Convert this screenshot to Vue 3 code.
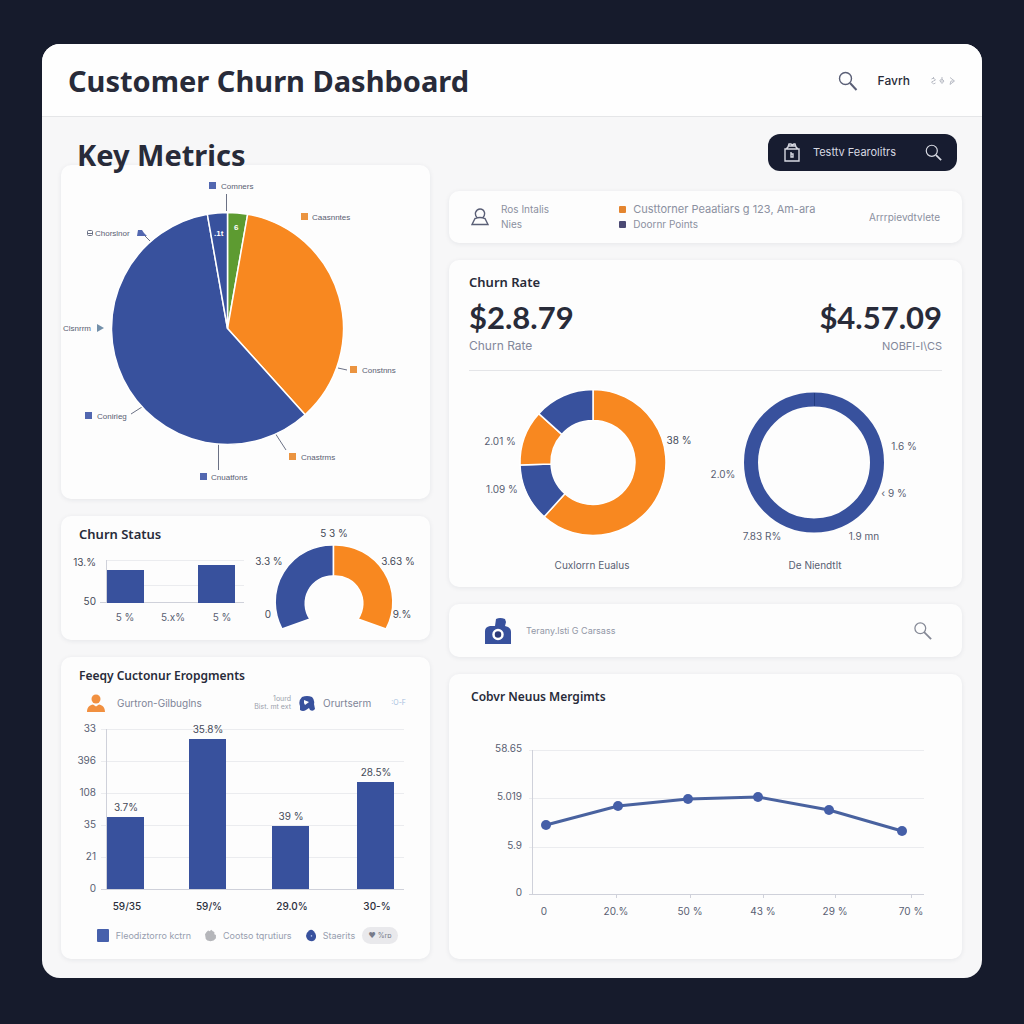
<script setup>
const point = (cx, cy, r, deg) => {
  const a = ((deg - 90) * Math.PI) / 180
  return `${(cx + r * Math.cos(a)).toFixed(2)} ${(cy + r * Math.sin(a)).toFixed(2)}`
}

const slice = (cx, cy, r, from, to) =>
  `M${cx} ${cy}L${point(cx, cy, r, from)}A${r} ${r} 0 ${to - from > 180 ? 1 : 0} 1 ${point(cx, cy, r, to)}Z`

const ring = (cx, cy, r, inner, from, to) => {
  const large = to - from > 180 ? 1 : 0
  return `M${point(cx, cy, r, from)}A${r} ${r} 0 ${large} 1 ${point(cx, cy, r, to)}L${point(cx, cy, inner, to)}A${inner} ${inner} 0 ${large} 0 ${point(cx, cy, inner, from)}Z`
}

const pieSlices = [
  { from: 0, to: 10, kind: 'green' },
  { from: 10, to: 138, kind: 'orange' },
  { from: 138, to: 350, kind: 'blue' },
  { from: 350, to: 360, kind: 'blue' }
]

const pieLabels = [
  { text: 'Comners', x: 160, y: 24, mark: 148, kind: 'blue' },
  { text: 'Caasnntes', x: 251, y: 55, mark: 240, kind: 'orange' },
  { text: 'Constnns', x: 301, y: 208, mark: 289, kind: 'orange' },
  { text: 'Cnastrms', x: 240, y: 295, mark: 228, kind: 'orange' },
  { text: 'Cnuatfons', x: 150, y: 315, mark: 139, kind: 'blue' },
  { text: 'Conirieg', x: 36, y: 254, mark: 24, kind: 'blue' }
]

const donutSlices = [
  { from: 0, to: 222, kind: 'orange' },
  { from: 222, to: 268, kind: 'blue' },
  { from: 268, to: 312, kind: 'orange' },
  { from: 312, to: 360, kind: 'blue' }
]

const segmentTicks = [
  { text: '33', y: 14 },
  { text: '396', y: 46 },
  { text: '108', y: 78 },
  { text: '35', y: 110 },
  { text: '21', y: 142 },
  { text: '0', y: 174 }
]

const segmentBars = [
  { x: 46, top: 102, value: '3.7%', label: '59/35' },
  { x: 128, top: 24, value: '35.8%', label: '59/%' },
  { x: 211, top: 111, value: '39 %', label: '29.0%' },
  { x: 296, top: 67, value: '28.5%', label: '30-%' }
]

const trendTicks = [
  { text: '58.65', y: 40 },
  { text: '5.019', y: 88 },
  { text: '5.9', y: 137 },
  { text: '0', y: 184 }
]

const trend = [
  { x: 97, y: 115, tick: 95, label: '0' },
  { x: 169, y: 96, tick: 167, label: '20.%' },
  { x: 239, y: 89, tick: 241, label: '50 %' },
  { x: 309, y: 87, tick: 314, label: '43 %' },
  { x: 380, y: 100, tick: 386, label: '29 %' },
  { x: 453, y: 121, tick: 462, label: '70 %' }
]
const trendLine = trend.map((p) => `${p.x},${p.y}`).join(' ')
</script>

<template>
  <main class="panel">
    <header class="topbar">
      <h1>Customer Churn Dashboard</h1>
      <nav class="top-actions" aria-label="Account">
        <button class="plain" aria-label="Search">
          <svg width="20" height="20" viewBox="0 0 20 20" class="line-icon">
            <circle cx="7.5" cy="7.5" r="6" /><path d="M12 12l6.5 7" stroke-width="2" />
          </svg>
        </button>
        <a href="#" class="user">Favrh</a>
        <button class="plain" aria-label="More">
          <svg width="26" height="10" viewBox="0 0 26 10" class="more">
            <path d="M3.500 1v2M1.500 3l2-1 2 2-2 1-2 1 2 2 2-1M12 1v2M9.500 4.500l2.500-1.500 2 2-2 2.500-2-2.500h3M20 1.500l4.500 3.500-4.500 3.500 1-3.500h3" />
          </svg>
        </button>
      </nav>
    </header>

    <div class="content">
      <div class="column">
        <h2>Key Metrics</h2>

        <section class="card">
          <svg viewBox="0 0 369 334" class="chart pie" role="img" aria-label="Key metrics breakdown">
            <g class="leaders">
              <path d="M165.500 29v17M157.500 278v27M70 249l11-7M214 268l11 17M277 203l9 2M81 68l8 8" />
            </g>
            <path v-for="s in pieSlices" :key="s.from" :d="slice(166.5, 163.5, 116, s.from, s.to)" :class="['slice', s.kind]" />
            <g v-for="l in pieLabels" :key="l.text">
              <rect :x="l.mark" :y="l.y - 7" width="7" height="7" :class="['mark', l.kind]" />
              <text :x="l.x" :y="l.y">{{ l.text }}</text>
            </g>
            <rect x="26.500" y="65.500" width="5" height="5" rx="1" class="outlined" />
            <path d="M27 68.500h4" class="outlined" />
            <text x="34" y="71">Chorslnor</text>
            <path d="M76 71l1-6h4l2 3 3 3z" class="mark blue" />
            <text x="2" y="166">Clsnrrm</text>
            <path d="M36 159l7 4-7 4z" class="mark pointer" />
            <text x="153" y="71" class="on-slice">.1t</text>
            <text x="173" y="65" class="on-slice">6</text>
          </svg>
        </section>

        <section class="card status">
          <div>
            <h3>Churn Status</h3>
            <svg viewBox="0 0 190 96" class="chart" role="img" aria-label="Churn status bars">
              <path d="M45 16.500h138M45 41.500h138" class="grid" />
              <path d="M45.500 16v43M39 58.500h144" class="axis" />
              <rect x="46" y="26" width="37" height="33" class="blue" />
              <rect x="137" y="21" width="37" height="38" class="blue" />
              <g class="ends dark"><text x="35" y="22">13.%</text><text x="35" y="61">50</text></g>
              <g class="mids"><text x="64" y="77">5 %</text><text x="112" y="77">5.x%</text><text x="161" y="77">5 %</text></g>
            </svg>
          </div>
          <svg viewBox="0 0 179 124" class="chart" role="img" aria-label="Churn status gauge">
            <path d="M31 113A57 57 0 0 1 82.500 29V60A27.500 27.500 0 0 0 59 103Z" class="slice blue" />
            <path d="M82.500 29A57 57 0 0 1 135 113L107 103A27.500 27.500 0 0 0 82.500 60Z" class="slice orange" />
            <g class="mids dark">
              <text x="83" y="21">5 3 %</text><text x="18" y="49">3.3 %</text><text x="147" y="49">3.63 %</text>
              <text x="17" y="102">0</text><text x="151" y="102">9.%</text>
            </g>
          </svg>
        </section>

        <section class="card">
          <h3 class="compact">Feeqy Cuctonur Eropgments</h3>
          <div class="segment-head">
            <svg width="18" height="18" viewBox="0 0 18 18" class="person">
              <circle cx="9" cy="5" r="4.500" /><path d="M0 18c0-5 3-7 6-7.500l3 2 3-2c3 .5 6 2.500 6 7.500z" />
            </svg>
            <span class="who">Gurtron-Gilbuglns</span>
            <span class="tiny">1ourd<br />Bist. mt ext</span>
            <svg width="16" height="15" viewBox="0 0 16 15">
              <path d="M3 1q5-2 10 0 3 3 2 7l1 5q-2 3-5 1l-1-2-3 2q-3 2-6 0v-4q-2-5 2-9z" class="blue" />
              <path d="M5 4l5 2-4 3-1-2z" fill="#fff" />
            </svg>
            <span>Orurtserm</span>
            <span class="tiny pale">:O-F</span>
          </div>
          <svg viewBox="0 0 369 204" class="chart" role="img" aria-label="Customer segments">
            <path v-for="t in segmentTicks" :key="t.text" :d="`M40 ${t.y + .5}H343`" :class="t.text === '0' ? 'axis' : 'grid'" />
            <path d="M45.500 14v160" class="axis" />
            <g class="ends"><text v-for="t in segmentTicks" :key="t.text" x="35" :y="t.y + 3">{{ t.text }}</text></g>
            <g v-for="b in segmentBars" :key="b.x" class="mids dark">
              <rect :x="b.x" :y="b.top" width="37" :height="174 - b.top" class="blue" />
              <text :x="b.x + 19" :y="b.top - 6">{{ b.value }}</text>
              <text :x="b.x + 20" y="195" class="strong">{{ b.label }}</text>
            </g>
          </svg>
          <div class="legend">
            <i class="swatch"></i><span>Fleodiztorro kctrn</span>
            <svg width="14" height="15" viewBox="0 0 14 15">
              <path d="M2 3l2-2 2 1 2-2 2 2 2 1v3l2 1v4l-3 3-4 1-4-1-2-2-1-6z" fill="#b5b6ba" />
            </svg>
            <span>Cootso tqrutiurs</span>
            <svg width="13" height="15" viewBox="0 0 13 15">
              <path d="M4 1q3-2 6 1 3 3 3 7-1 6-6 6-6-1-7-7 1-5 4-7z" class="blue" /><circle cx="7" cy="8" r="1" fill="#aebfed" />
            </svg>
            <span>Staerits</span>
            <button class="pill">♥ %rɒ</button>
          </div>
        </section>
      </div>

      <div class="column right">
        <button class="cta">
          <svg width="16" height="19" viewBox="0 0 16 19" class="line-icon">
            <path d="M1 6h14v12H1zM2 6l2-2 1-3h2l1 1 2-1h1l1 3 2 2M5 3h6M7 9v5h2v-3H7" />
          </svg>
          <span>Testtv Fearolitrs</span>
          <svg width="17" height="17" viewBox="0 0 20 20" class="line-icon">
            <circle cx="8" cy="8" r="6.500" /><path d="M13 13l6 6" stroke-width="2" />
          </svg>
        </button>

        <section class="card info">
          <div class="info-user">
            <svg width="18" height="18" viewBox="0 0 18 18" class="line-icon">
              <path d="M6 9.500Q4 8 4.500 4.500 6 1 9 1q3.500 0 4.500 3.500.5 3-1.500 5M4 10.500L1 16.500h16l-3-6Q9 8.500 4 10.500z" />
            </svg>
            <p>Ros Intalis<br />Nies</p>
          </div>
          <ul>
            <li><i class="dot orange-bg"></i><span class="wide">Custtorner Peaatiars g 123, Am-ara</span></li>
            <li><i class="dot navy-bg"></i>Doornr Points</li>
          </ul>
          <a href="#">Arrrpievdtvlete</a>
        </section>

        <section class="card rates">
          <h3>Churn Rate</h3>
          <div class="figures">
            <div><strong>$2.8.79</strong><span>Churn Rate</span></div>
            <div class="last"><strong>$4.57.09</strong><span class="caps">NOBFI-I\CS</span></div>
          </div>
          <svg viewBox="0 0 513 216" class="chart" role="img" aria-label="Churn rate rings">
            <path v-for="s in donutSlices" :key="s.from" :d="ring(144, 91.500, 73, 42, s.from, s.to)" :class="['slice', s.kind]" />
            <circle cx="365" cy="91.500" r="63" class="loop" />
            <path d="M365.500 22v13" class="seam" />
            <g class="mids">
              <text x="51" y="74">2.01 %</text><text x="230" y="73" class="dark">38 %</text><text x="53" y="122">1.09 %</text>
              <text x="274" y="107">2.0%</text><text x="455" y="79">1.6 %</text><text x="445" y="126">‹ 9 %</text>
              <text x="313" y="169">7.83 R%</text><text x="415" y="169">1.9 mn</text>
              <text x="143" y="198">Cuxlorrn Eualus</text><text x="366" y="198">De Niendtlt</text>
            </g>
          </svg>
        </section>

        <form class="card search" @submit.prevent>
          <svg width="26" height="26" viewBox="0 0 26 26">
            <path d="M0 26V13q0-4 5-5h5l1-7q4-2 9 0l1 3-1 4q6 1 6 6v12z" class="blue" />
            <circle cx="13" cy="16.500" r="4.500" fill="#2c3a78" stroke="#fff" stroke-width="2.500" />
          </svg>
          <input type="text" aria-label="Search" placeholder="Terany.lsti G Carsass" />
          <button class="plain" aria-label="Search">
            <svg width="18" height="18" viewBox="0 0 20 20" class="line-icon soft">
              <circle cx="7" cy="7" r="6" /><path d="M11 11l8 8" stroke-width="2" />
            </svg>
          </button>
        </form>

        <section class="card trend">
          <h3>Cobvr Neuus Mergimts</h3>
          <svg viewBox="0 0 513 236" class="chart" role="img" aria-label="Trend">
            <path v-for="t in trendTicks" :key="t.text" :d="`M80 ${t.y + .5}H475`" :class="t.text === '0' ? 'axis' : 'grid'" />
            <path d="M83.500 40v144" class="axis" />
            <path v-for="p in trend.slice(1)" :key="p.x" :d="`M${p.tick + .5} 184v4`" class="axis" />
            <g class="ends"><text v-for="t in trendTicks" :key="t.text" x="73" :y="t.y + 2">{{ t.text }}</text></g>
            <polyline :points="trendLine" class="trend-line" />
            <g v-for="p in trend" :key="p.x" class="mids">
              <circle :cx="p.x" :cy="p.y" r="5" class="trend-dot" />
              <text :x="p.tick" y="205">{{ p.label }}</text>
            </g>
          </svg>
        </section>
      </div>
    </div>
  </main>
</template>

<style>
body {
  margin: 0;
  background: #161b2c;
}
</style>

<style scoped>
.panel {
  margin: 44px 42px;
  border-radius: 18px;
  background: #f7f7f8;
  color: #282b39;
  font: 10px/15px Inter, "Liberation Sans", sans-serif;
  overflow: hidden;
}
h1, h2, h3, p, ul { margin: 0; padding: 0; }
button { font: inherit; border: 0; cursor: pointer; }
a { color: inherit; text-decoration: none; }
.plain { padding: 0; background: none; display: flex; }

.topbar {
  display: flex;
  align-items: center;
  justify-content: space-between;
  height: 73px;
  padding: 2px 26px 0;
  box-sizing: border-box;
  background: #fefefe;
  border-bottom: 1px solid #e5e6e8;
}
h1, h2 { font: 700 29px/36px "Noto Sans", sans-serif; }
h2 {
  position: relative;
  z-index: 1;
  margin: 19px 16px -7px;
}
h3 {
  padding: 9px 18px 1px;
  font: 600 13px/18px "Noto Sans", sans-serif;
}
h3.compact { padding-top: 10px; font-size: 12px; }
.top-actions { display: flex; align-items: center; gap: 20px; }
.user { font-size: 12px; font-weight: 500; line-height: 20px; }
.line-icon { fill: none; stroke: #5a5f76; stroke-width: 1.4; }
.line-icon.soft { stroke: #858996; }
.more { fill: none; stroke: #b9bcc5; }

.content {
  display: grid;
  grid-template-columns: 369fr 513fr;
  gap: 19px;
  padding: 1px 20px 19px 19px;
}
.column { display: flex; flex-direction: column; gap: 17px; min-width: 0; }
.column h2 + .card { margin-top: -18px; }
.card {
  border-radius: 10px;
  background: #fdfdfd;
  box-shadow: 0 1px 5px #1c243c14;
}

.chart { display: block; width: 100%; height: auto; font-size: 10px; fill: #596072; }
.chart.pie { font: 8px "Liberation Sans", Arial, sans-serif; }
.blue { fill: #38519d; }
.orange { fill: #f88820; }
.green { fill: #5d9b31; }
.slice { stroke: #fff; stroke-width: 1.5; }
.mark.blue { fill: #5267b0; }
.mark.orange { fill: #eb9440; }
.mark.pointer { fill: #7390aa; }
.leaders, .outlined { fill: none; stroke: #6b7185; stroke-width: 1; }
.on-slice { fill: #fff; font-weight: 700; }
.grid { stroke: #ebecef; }
.axis { stroke: #cfd1da; fill: none; }
.ends { text-anchor: end; }
.mids { text-anchor: middle; }
.dark { fill: #454a58; }
.strong { fill: #2b2f3c; font-weight: 500; }
.loop { fill: none; stroke: #38519d; stroke-width: 14; }
.seam { stroke: #233c80; }
.trend-line { fill: none; stroke: #49629f; stroke-width: 3; }
.trend-dot { fill: #455fa8; }

.status { display: grid; grid-template-columns: 190fr 179fr; }
.segment-head, .legend {
  display: flex;
  align-items: center;
  height: 24px;
  color: #7e8497;
}
.segment-head { padding: 5px 24px 0 26px; gap: 8px; }
.person { fill: #f19040; }
.who { flex: 1; margin-left: 4px; }
.tiny { font-size: 7px; line-height: 8px; text-align: right; color: #9a9fac; }
.tiny.pale { margin-left: 8px; padding-left: 4px; color: #a5bddd; }
.legend {
  gap: 7px;
  padding: 4px 32px 12px 36px;
  font-size: 9px;
  color: #979daf;
  white-space: nowrap;
}
.legend svg { margin-left: 7px; }
.swatch { width: 15px; height: 13px; border-radius: 1px; background: #4660ac; }
.pill {
  width: 46px;
  padding: 0;
  border-radius: 9px;
  background: #e9e9ec;
  color: #777b89;
  font-size: 7px;
  line-height: 17px;
}

.cta {
  display: flex;
  align-items: center;
  align-self: flex-end;
  gap: 13px;
  height: 37px;
  margin: 16px 5px 3px 0;
  padding: 0 15px 0 16px;
  border-radius: 12px;
  background: #171c30;
  color: #d7d9e2;
  font-size: 11px;
}
.cta .line-icon { stroke: #d7d9e2; }
.cta span { margin-right: 16px; }
.info {
  display: grid;
  grid-template-columns: 149fr 251fr auto;
  align-items: center;
  padding: 11px 22px;
  color: #8b90a0;
}
.info-user { display: flex; align-items: center; gap: 12px; }
.info ul { list-style: none; }
.info li { display: flex; align-items: center; gap: 7px; white-space: nowrap; }
.wide { font-size: 11px; }
.dot { width: 7px; height: 7px; border-radius: 1px; }
.orange-bg { background: #e4852f; }
.navy-bg { background: #4b4973; }

.rates h3 { padding: 13px 20px 0; }
.figures {
  display: flex;
  justify-content: space-between;
  margin: 0 20px;
  padding: 8px 0 13px;
  border-bottom: 1px solid #e4e5e8;
}
.figures strong { display: block; font: 700 31px/36px Lato, sans-serif; }
.figures span { display: block; font-size: 12px; line-height: 22px; color: #82879a; }
.figures .last { text-align: right; }
.figures .caps { font-size: 11px; }

.search { display: flex; align-items: center; gap: 15px; height: 53px; padding: 0 30px 0 36px; }
.search input {
  flex: 1;
  min-width: 0;
  padding: 0;
  border: 0;
  background: none;
  font: 9px/15px Inter, sans-serif;
  outline-offset: 4px;
}
.search input::placeholder { color: #9297a6; opacity: 1; }
.trend { padding-bottom: 13px; }
.trend h3 { padding: 14px 22px 4px; font-size: 12px; }
</style>
